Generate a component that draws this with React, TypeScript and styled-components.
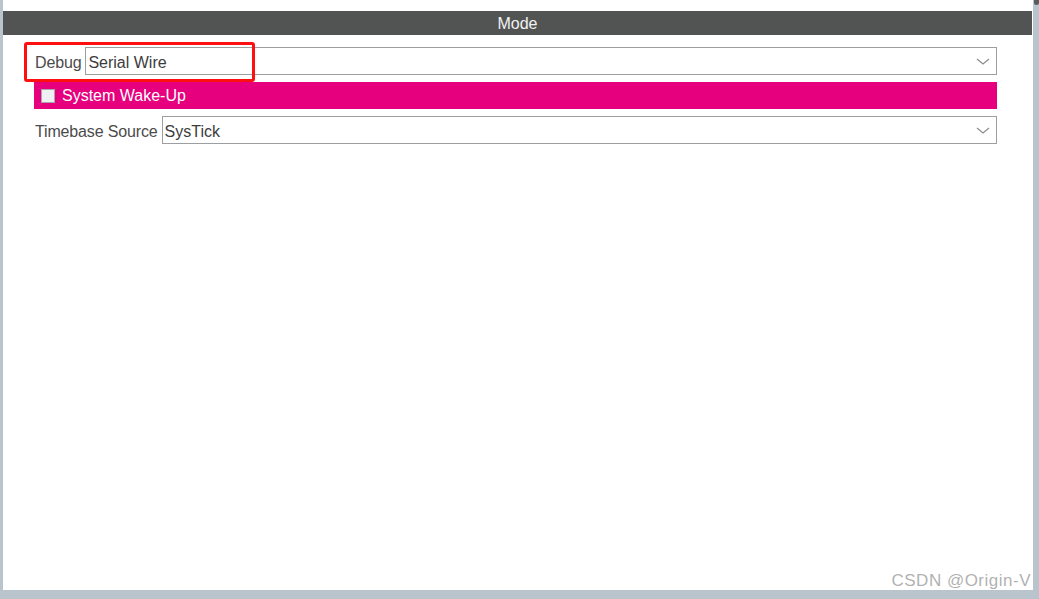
import React from 'react'
import styled, { createGlobalStyle } from 'styled-components'

const GlobalStyle = createGlobalStyle`
  html, body {
    margin: 0;
    padding: 0;
    background: #b9c4cc;
  }
  body {
    font-family: "Liberation Sans", Arial, sans-serif;
  }
`

const Frame = styled.div`
  width: 1039px;
  height: 599px;
  box-sizing: border-box;
  padding: 0 0 9px 3px;
  display: flex;
  background: #b9c4cc;
  overflow: hidden;
`

const Panel = styled.div`
  position: relative;
  width: 1030px;
  height: 590px;
  background: #fff;
  overflow: hidden;
  display: flex;
  flex-direction: column;
`

const Scrollbar = styled.div`
  flex: 1;
  display: flex;
  flex-direction: column;
`

const Thumb = styled.div`
  height: 5px;
  margin-left: 1px;
  background: #5a5c5c;
  border-radius: 0 0 3px 3px;
`

const TopStrip = styled.div`
  height: 11px;
`

const Header = styled.div`
  height: 24px;
  box-sizing: border-box;
  padding-top: 2px;
  margin-right: 1px;
  background: #525453;
  color: #f2f2f2;
  font-size: 16px;
  line-height: 22px;
  text-align: center;
`

const Rows = styled.div`
  display: flex;
  flex-direction: column;
  gap: 7px;
  padding: 12px 36px 0 32px;
`

const Row = styled.div`
  display: flex;
  align-items: stretch;
  height: 28px;
  gap: 4px;
`

const Label = styled.span`
  display: flex;
  align-items: center;
  padding-top: 4px;
  box-sizing: border-box;
  font-size: 16px;
  color: #4b4b4b;
  white-space: nowrap;
  letter-spacing: -0.15px;
`

const Select = styled.div`
  flex: 1;
  height: 28px;
  box-sizing: border-box;
  border: 1px solid #9c9ea0;
  display: flex;
  align-items: center;
  justify-content: space-between;
  padding: 4px 6px 0 2px;
  font-size: 16px;
  color: #3c3c3c;
`

const Chevron = styled.svg`
  width: 14px;
  height: 7px;
  margin-top: -3px;
`

const PinkBar = styled.label<{ $color?: string }>`
  display: flex;
  align-items: center;
  gap: 7px;
  height: 27px;
  box-sizing: border-box;
  margin-left: -1px;
  padding: 1px 0 0 7px;
  background: ${p => p.$color || '#e6007e'};
  color: #fff;
  font-size: 16px;
`

const CheckBox = styled.span`
  width: 14px;
  height: 14px;
  box-sizing: border-box;
  border: 1px solid #a4a8ac;
  background: #eef0f2;
`

const Highlight = styled.div`
  position: absolute;
  left: 21px;
  top: 42px;
  width: 231px;
  height: 40px;
  box-sizing: border-box;
  border: 3px solid #ff1010;
  border-radius: 3px;
  pointer-events: none;
`

const Watermark = styled.div`
  position: absolute;
  right: 2px;
  top: 571px;
  font-size: 17px;
  color: rgba(150, 150, 150, 0.75);
  white-space: nowrap;
  letter-spacing: 0.5px;
`

function DropDown({ value }: { value: string }) {
  return (
    <Select>
      <span>{value}</span>
      <Chevron viewBox="0 0 14 7">
        <polyline points="1,1 7,6 13,1" fill="none" stroke="#8a8c8e" strokeWidth="1.2" />
      </Chevron>
    </Select>
  )
}

export default function App() {
  return (
    <Frame>
      <GlobalStyle />
      <Panel>
        <TopStrip />
        <Header>Mode</Header>
        <Rows>
          <Row>
            <Label>Debug</Label>
            <DropDown value="Serial Wire" />
          </Row>
          <PinkBar>
            <CheckBox />
            System Wake-Up
          </PinkBar>
          <Row>
            <Label>Timebase Source</Label>
            <DropDown value="SysTick" />
          </Row>
        </Rows>
        <Highlight />
        <Watermark>CSDN @Origin-V</Watermark>
      </Panel>
      <Scrollbar>
        <Thumb />
      </Scrollbar>
    </Frame>
  )
}
